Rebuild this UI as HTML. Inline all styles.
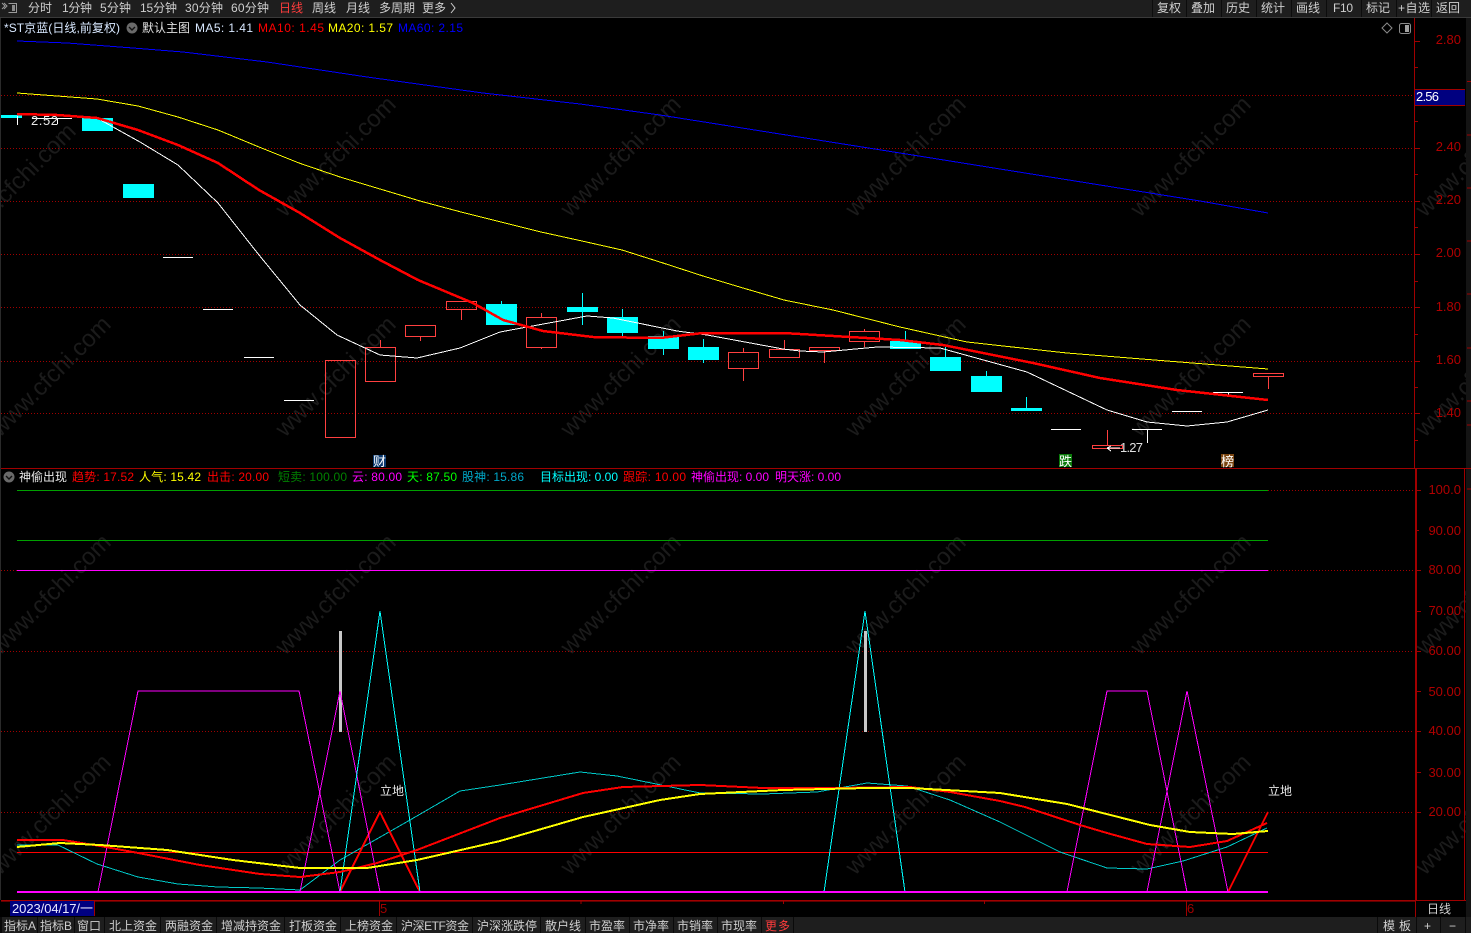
<!DOCTYPE html>
<html><head><meta charset="utf-8"><title>*ST京蓝</title>
<style>
html,body{margin:0;padding:0;background:#000;width:1471px;height:933px;overflow:hidden}
svg{display:block;position:absolute;left:0;top:0}
text{font-family:"Liberation Sans","Noto Sans CJK SC",sans-serif;font-size:12px}
.m{fill:#cfcfcf}
.ax{fill:#b00000;text-anchor:end}
.wm{fill:#1b1b1b;font-size:24px}
.g{stroke:#a00000;stroke-width:1;stroke-dasharray:1 2;fill:none}
.rk{fill:none;stroke:#ff4040;stroke-width:1}
.rw{stroke:#ff4040;stroke-width:1;fill:none}
.cy{fill:#00ffff}
.cw{stroke:#00ffff;stroke-width:1;fill:none}
.wd{stroke:#fff;stroke-width:1;fill:none}
.t{stroke:#a00000;stroke-width:1;fill:none}
.b{fill:#1e1e1e}
.l{fill:none}
</style></head><body>
<svg width="1471" height="933" viewBox="0 0 1471 933" xmlns="http://www.w3.org/2000/svg">
<rect width="1471" height="933" fill="#000"/>

<!-- watermark -->
<g transform="translate(8,3)">
<text class="wm" transform="translate(-43,242) rotate(-45)">www.cfchi.com</text>
<text class="wm" transform="translate(277,215) rotate(-45)">www.cfchi.com</text>
<text class="wm" transform="translate(562,215) rotate(-45)">www.cfchi.com</text>
<text class="wm" transform="translate(847,215) rotate(-45)">www.cfchi.com</text>
<text class="wm" transform="translate(1132,215) rotate(-45)">www.cfchi.com</text>
<text class="wm" transform="translate(1417,215) rotate(-45)">www.cfchi.com</text>
<text class="wm" transform="translate(-8,435) rotate(-45)">www.cfchi.com</text>
<text class="wm" transform="translate(277,435) rotate(-45)">www.cfchi.com</text>
<text class="wm" transform="translate(562,435) rotate(-45)">www.cfchi.com</text>
<text class="wm" transform="translate(847,435) rotate(-45)">www.cfchi.com</text>
<text class="wm" transform="translate(1132,435) rotate(-45)">www.cfchi.com</text>
<text class="wm" transform="translate(1417,435) rotate(-45)">www.cfchi.com</text>
<text class="wm" transform="translate(-8,653) rotate(-45)">www.cfchi.com</text>
<text class="wm" transform="translate(277,653) rotate(-45)">www.cfchi.com</text>
<text class="wm" transform="translate(562,653) rotate(-45)">www.cfchi.com</text>
<text class="wm" transform="translate(847,653) rotate(-45)">www.cfchi.com</text>
<text class="wm" transform="translate(1132,653) rotate(-45)">www.cfchi.com</text>
<text class="wm" transform="translate(1417,653) rotate(-45)">www.cfchi.com</text>
<text class="wm" transform="translate(-8,873) rotate(-45)">www.cfchi.com</text>
<text class="wm" transform="translate(277,873) rotate(-45)">www.cfchi.com</text>
<text class="wm" transform="translate(562,873) rotate(-45)">www.cfchi.com</text>
<text class="wm" transform="translate(847,873) rotate(-45)">www.cfchi.com</text>
<text class="wm" transform="translate(1132,873) rotate(-45)">www.cfchi.com</text>
<text class="wm" transform="translate(1417,873) rotate(-45)">www.cfchi.com</text>
</g>

<!-- top bar -->
<rect x="0" y="0" width="1471" height="17" class="b"/>
<rect x="0" y="17" width="1471" height="1" fill="#3a3a3a"/>
<g shape-rendering="crispEdges" fill="#0c0c0c">
<rect x="1152" y="0" width="1" height="17"/><rect x="1186" y="0" width="1" height="17"/><rect x="1221" y="0" width="1" height="17"/><rect x="1256" y="0" width="1" height="17"/><rect x="1291" y="0" width="1" height="17"/><rect x="1326" y="0" width="1" height="17"/><rect x="1361" y="0" width="1" height="17"/><rect x="1396" y="0" width="1" height="17"/><rect x="1431" y="0" width="1" height="17"/>
</g>
<g fill="none" stroke="#9a9a9a" stroke-width="1">
<path d="M2 3l3 3-3 3M4 3l3 3-3 3" />
<path d="M8.5 3.5H16.5V12.5H8.5" />
<rect x="12" y="5" width="3" height="6" fill="#8a8a8a" stroke="none"/>
</g>
<g class="m">
<text x="28" y="12" class="m" textLength="24">分时</text>
<text x="62" y="12" class="m" textLength="30">1分钟</text>
<text x="100" y="12" class="m" textLength="31">5分钟</text>
<text x="140" y="12" class="m" textLength="37">15分钟</text>
<text x="185" y="12" class="m" textLength="38">30分钟</text>
<text x="231" y="12" class="m" textLength="38">60分钟</text>
<text x="279" y="12" fill="#ff3c3c" textLength="24">日线</text>
<text x="312" y="12" class="m" textLength="24">周线</text>
<text x="346" y="12" class="m" textLength="24">月线</text>
<text x="379" y="12" class="m" textLength="36">多周期</text>
<text x="422" y="12" class="m" textLength="24">更多</text>
<path d="M451 3l4 5-4 5" fill="none" stroke="#cfcfcf"/>
<text x="1157" y="12" class="m" textLength="24">复权</text>
<text x="1191" y="12" class="m" textLength="24">叠加</text>
<text x="1226" y="12" class="m" textLength="24">历史</text>
<text x="1261" y="12" class="m" textLength="24">统计</text>
<text x="1296" y="12" class="m" textLength="24">画线</text>
<text x="1333" y="12" class="m" textLength="20">F10</text>
<text x="1366" y="12" class="m" textLength="24">标记</text>
<text x="1398" y="12" class="m" textLength="32">+自选</text>
<text x="1436" y="12" class="m" textLength="24">返回</text>
</g>

<!-- left edge / right strip -->
<rect x="0" y="18" width="1" height="882" fill="#2a2a2a"/>
<rect x="1466" y="18" width="5" height="899" fill="#141414"/>

<!-- grid main -->
<g shape-rendering="crispEdges">
<path class="g" d="M1 95.5H1414M1 148.5H1414M1 201.5H1414M1 254.5H1414M1 307.5H1414M1 361.5H1414M1 413.5H1414"/>
<path class="g" d="M1 651.5H1414M1 731.5H1414M1 812.5H1414"/>

<!-- candles -->
<rect class="cy" x="1" y="115" width="21" height="3"/>
<path class="wd" d="M17.5 116V125M32 118.5H72M57.5 118V124"/>
<rect class="cy" x="82" y="118" width="31" height="13"/>
<rect class="cy" x="123" y="184" width="31" height="14"/>
<path class="wd" d="M163 257.5H193M203 309.5H233M244 357.5H274M284 400.5H314"/>
<rect class="rk" x="325.5" y="360.5" width="30" height="77"/>
<rect class="rk" x="365.5" y="347.5" width="30" height="34"/><path class="rw" d="M380.5 340V347"/>
<rect class="rk" x="405.5" y="325.5" width="30" height="11"/><path class="rw" d="M420.5 337V341"/>
<rect class="rk" x="446.5" y="301.5" width="30" height="8"/><path class="rw" d="M461.5 310V320"/>
<rect class="cy" x="486" y="304" width="31" height="21"/><path class="cw" d="M501.5 301V304"/>
<rect class="rk" x="526.5" y="317.5" width="30" height="30"/><path class="rw" d="M541.5 313V317M541.5 348V349"/>
<rect class="cy" x="567" y="307" width="31" height="5"/><path class="cw" d="M582.5 293V325"/>
<rect class="cy" x="607" y="317" width="31" height="16"/><path class="cw" d="M622.5 309V336"/>
<rect class="cy" x="648" y="336" width="31" height="13"/><path class="cw" d="M663.5 331V355"/>
<rect class="cy" x="688" y="347" width="31" height="13"/><path class="cw" d="M703.5 339V363"/>
<rect class="rk" x="728.5" y="352.5" width="30" height="16"/><path class="rw" d="M743.5 348V352M743.5 369V381"/>
<rect class="rk" x="769.5" y="349.5" width="30" height="8"/><path class="rw" d="M784.5 340V349"/>
<rect class="rk" x="809.5" y="347.5" width="30" height="3"/><path class="rw" d="M824.5 351V363"/>
<rect class="rk" x="849.5" y="331.5" width="30" height="10"/><path class="rw" d="M864.5 329V331M864.5 342V347"/>
<rect class="cy" x="890" y="341" width="31" height="8"/><path class="cw" d="M905.5 331V341"/>
<rect class="cy" x="930" y="357" width="31" height="14"/><path class="cw" d="M945.5 347V357"/>
<rect class="cy" x="971" y="376" width="31" height="16"/><path class="cw" d="M986.5 371V376"/>
<rect class="cy" x="1011" y="408" width="31" height="3"/><path class="cw" d="M1026.5 397V408"/>
<path class="wd" d="M1051 429.5H1081"/>
<rect class="rk" x="1092.5" y="445.5" width="30" height="3"/><path class="rw" d="M1107.5 430V445"/>
<path class="wd" d="M1132 429.5H1162M1147.5 430V443M1172 411.5H1202M1213 392.5H1243M1228.5 393V395"/>
<rect class="rk" x="1253.5" y="373.5" width="30" height="3"/><path class="rw" d="M1268.5 377V389"/>
</g>

<!-- MA lines -->
<g shape-rendering="crispEdges" fill="none" stroke-linejoin="round">
<polyline stroke="#0000ff" stroke-width="1" points="17,41 67,43 133,48 183,52 267,62 367,77 483,93 580,104 660,115 780,134 900,153 1000,169 1100,185 1200,201 1268,213"/>
<polyline stroke="#ffff00" stroke-width="1" points="17,93 57,96 97,99 138,106 178,117 218,130 259,147 299,163 340,177 380,189 420,201 461,212 501,222 541,232 582,241 622,250 663,263 703,276 743,288 784,300 833,310 900,327 967,342 1067,353 1167,361 1268,369"/>
<polyline stroke="#ffffff" stroke-width="1" points="97,118 113,127 140,142 178,165 218,203 259,255 300,305 337,335 380,355 417,358 460,348 500,332 527,327 587,316 613,318 677,331 707,335 783,349 800,351 823,352 877,347 940,348 1027,372 1107,410 1147,422 1187,426 1227,422 1268,410"/>
<polyline stroke="#ff0000" stroke-width="2.5" points="17,114 57,115 97,118 138,130 178,145 218,163 259,190 300,213 340,238 380,260 418,280 473,303 503,320 543,331 593,337 660,338 703,333 783,333 800,334 850,337 900,340 943,345 1033,363 1100,378 1177,390 1268,400"/>
</g>

<!-- markers main -->
<text x="31" y="125" fill="#e8e8e8" style="font-size:13px" textLength="27">2.52</text>
<text x="1120" y="452" fill="#e0e0e0" style="font-size:13px" textLength="23">1.27</text>
<path d="M1107 448H1120M1107 448l4-2M1107 448l4 3" stroke="#fff" fill="none" shape-rendering="crispEdges"/>
<rect x="373" y="455" width="13" height="12" fill="#0b3a70"/><text x="373" y="466" fill="#fff" style="font-size:13px">财</text>
<rect x="1059" y="454" width="13" height="13" fill="#0a7a0a"/><text x="1059" y="466" fill="#fff" style="font-size:13px">跌</text>
<rect x="1221" y="454" width="13" height="13" fill="#7a4510"/><text x="1221" y="466" fill="#fff" style="font-size:13px">榜</text>

<!-- main header -->
<text x="4" y="32" fill="#d8e8ff" textLength="116">*ST京蓝(日线,前复权)</text>
<circle cx="132" cy="28" r="5.5" fill="#6a6a6a"/><path d="M129 27l3 3 3-3" stroke="#111" stroke-width="1.4" fill="none"/>
<text x="142" y="32" fill="#e0e0e0" textLength="48">默认主图</text>
<text x="195" y="32" fill="#d8e8ff" textLength="58">MA5: 1.41</text>
<text x="258" y="32" fill="#ff0000" textLength="66">MA10: 1.45</text>
<text x="328" y="32" fill="#ffff00" textLength="65">MA20: 1.57</text>
<text x="398" y="32" fill="#0000ff" textLength="65">MA60: 2.15</text>
<path d="M1387 23l5 5-5 5-5-5z" fill="none" stroke="#8a8a8a"/>
<rect x="1399.5" y="23.5" width="11" height="10" rx="2" fill="none" stroke="#8a8a8a"/><rect x="1405" y="25" width="4" height="7" fill="#a0a0a0"/>

<!-- axis main -->
<g shape-rendering="crispEdges">
<path class="t" d="M1414.5 18V468M1415 41.5H1420M1415 67.5H1418M1415 121.5H1418M1415 148.5H1420M1415 174.5H1418M1415 201.5H1420M1415 227.5H1418M1415 254.5H1420M1415 281.5H1418M1415 307.5H1420M1415 334.5H1418M1415 361.5H1420M1415 387.5H1418M1415 413.5H1420M1415 440.5H1418"/>
<path stroke="#a00000" d="M1467 81.5H1471M1467 135H1471M1467 188H1471M1467 241H1471M1467 294H1471M1467 348H1471M1467 401H1471M1467 425H1471M1467 489H1471"/>
<rect x="1415" y="89" width="50" height="16" fill="#000080"/>
<path stroke="#a00000" d="M1415 89.5H1465M1415 105.5H1465"/>
</g>
<text x="1416" y="101" fill="#fff" style="font-size:13px" textLength="23">2.56</text>
<g>
<text class="ax" x="1461" y="44" style="font-size:13px">2.80</text>
<text class="ax" x="1461" y="151" style="font-size:13px">2.40</text>
<text class="ax" x="1461" y="204" style="font-size:13px">2.20</text>
<text class="ax" x="1461" y="257" style="font-size:13px">2.00</text>
<text class="ax" x="1461" y="311" style="font-size:13px">1.80</text>
<text class="ax" x="1461" y="364" style="font-size:13px">1.60</text>
<text class="ax" x="1461" y="417" style="font-size:13px">1.40</text>
</g>

<!-- divider -->
<rect x="1" y="468" width="1470" height="1" fill="#a00000" shape-rendering="crispEdges"/>

<!-- lower header -->
<circle cx="9" cy="477" r="5.5" fill="#6a6a6a"/><path d="M6 476l3 3 3-3" stroke="#111" stroke-width="1.4" fill="none"/>
<text x="19" y="481" fill="#e8e8e8" textLength="48">神偷出现</text>
<text x="72" y="481" fill="#ff0000" textLength="62">趋势: 17.52</text>
<text x="139" y="481" fill="#ffff00" textLength="62">人气: 15.42</text>
<text x="207" y="481" fill="#ff0000" textLength="62">出击: 20.00</text>
<text x="278" y="481" fill="#008000" textLength="69">短卖: 100.00</text>
<text x="352" y="481" fill="#ff00ff" textLength="50">云: 80.00</text>
<text x="407" y="481" fill="#00ff00" textLength="50">天: 87.50</text>
<text x="462" y="481" fill="#00a8c8" textLength="62">股神: 15.86</text>
<text x="540" y="481" fill="#00ffff" textLength="78">目标出现: 0.00</text>
<text x="623" y="481" fill="#ff0000" textLength="63">跟踪: 10.00</text>
<text x="691" y="481" fill="#ff00ff" textLength="78">神偷出现: 0.00</text>
<text x="775" y="481" fill="#ff00ff" textLength="66">明天涨: 0.00</text>

<!-- lower solid levels -->
<g shape-rendering="crispEdges" fill="none">
<path stroke="#00a000" d="M17 490.5H1268M17 540.5H1268"/>
<path stroke="#ff00ff" d="M17 570.5H1268"/>
<path class="g" d="M1 570.5H17M1268 570.5H1414M1268 490.5H1414"/>
<path stroke="#ff0000" d="M17 852.5H1268"/>

<!-- grey bars -->
<rect x="339" y="631" width="3" height="101" fill="#c8c8c8" stroke="none"/>
<rect x="864" y="631" width="3" height="101" fill="#c8c8c8" stroke="none"/>

<!-- teal -->
<polyline stroke="#00c8c8" stroke-width="1" points="17,845 58,845 97,864 138,877 178,884 218,887 259,888 300,890 340,860 410,820 460,791 500,785 580,772 617,776 700,793 763,794 817,792 867,783 907,786 950,800 1000,822 1060,852 1107,868 1147,869 1183,861 1227,847 1267,828"/>
<path stroke="#00c8c8" d="M300 891.5H340M1147 891.5H1187"/>

<!-- red triangles -->
<polyline stroke="#ff0000" stroke-width="2" points="340,892 380,812 420,892"/>
<polyline stroke="#ff0000" stroke-width="2" points="1228,892 1268,812"/>

<!-- magenta -->
<polyline stroke="#ff00ff" stroke-width="1" points="98,892 138,691 299,691 340,892"/>
<polyline stroke="#ff00ff" stroke-width="1" points="300,892 340,691 380,892"/>
<polyline stroke="#ff00ff" stroke-width="1" points="1067,892 1107,691 1147,691 1187,892"/>
<polyline stroke="#ff00ff" stroke-width="1" points="1147,892 1187,691 1228,892"/>

<!-- cyan -->
<polyline stroke="#00ffff" stroke-width="1" points="340,892 380,611 420,892"/>
<polyline stroke="#00ffff" stroke-width="1" points="824,892 865,611 905,892"/>

<!-- thick smooth lines -->
<polyline stroke="#ff0000" stroke-width="2" points="17,840 63,840 100,846 133,852 200,865 260,874 300,877 340,872 377,863 417,850 500,818 583,793 623,787 700,785 763,788 833,788 910,787 950,792 1000,801 1025,807 1080,825 1107,833 1147,844 1190,847 1227,841 1267,823"/>
<polyline stroke="#ffff00" stroke-width="2" points="17,847 60,843 100,845 167,850 233,860 300,868 367,868 417,860 500,841 583,817 660,800 700,794 783,790 867,788 910,788 1000,793 1067,804 1150,825 1190,832 1233,834 1268,831"/>

<!-- baseline -->
<path stroke="#ff00ff" stroke-width="2" d="M17 892H1268"/>
</g>
<text x="380" y="795" fill="#e8e8e8" textLength="24">立地</text>
<text x="1268" y="795" fill="#e8e8e8" textLength="24">立地</text>

<!-- lower axis -->
<g shape-rendering="crispEdges">
<rect x="1415" y="469" width="2" height="431" fill="#a00000"/>
<rect x="1464" y="469" width="1" height="431" fill="#a00000"/>
<path class="t" d="M1417 490.5H1421M1417 530.5H1419M1417 570.5H1421M1417 611.5H1421M1417 651.5H1421M1417 691.5H1421M1417 731.5H1421M1417 772.5H1421M1417 812.5H1421"/>
<rect x="1" y="900" width="1465" height="1" fill="#a00000"/>
<rect x="1" y="901" width="1414" height="1" fill="#600000"/>
<rect x="1415" y="900" width="1" height="17" fill="#a00000"/>
<rect x="379" y="901" width="1" height="15" fill="#a00000"/>
<rect x="1186" y="901" width="1" height="15" fill="#a00000"/>
<path class="t" d="M581 901V904M783.5 901V904M984.5 901V904"/>
<rect x="10" y="901" width="84" height="15" fill="#000080"/>
<rect x="94" y="901" width="1" height="15" fill="#a00000"/>
</g>
<g>
<text class="ax" x="1461" y="494" style="font-size:13px" >100.0</text>
<text class="ax" x="1461" y="535" style="font-size:13px">90.00</text>
<text class="ax" x="1461" y="574" style="font-size:13px">80.00</text>
<text class="ax" x="1461" y="615" style="font-size:13px">70.00</text>
<text class="ax" x="1461" y="655" style="font-size:13px">60.00</text>
<text class="ax" x="1461" y="696" style="font-size:13px">50.00</text>
<text class="ax" x="1461" y="735" style="font-size:13px">40.00</text>
<text class="ax" x="1461" y="777" style="font-size:13px">30.00</text>
<text class="ax" x="1461" y="816" style="font-size:13px">20.00</text>
</g>
<text x="12" y="913" fill="#e8e8ff" style="font-size:13px" textLength="81">2023/04/17/一</text>
<text x="380" y="913" fill="#a00000" style="font-size:13px">5</text>
<text x="1187" y="913" fill="#a00000" style="font-size:13px">6</text>
<text x="1427" y="913" fill="#d0d0d0" textLength="24">日线</text>

<!-- bottom bar -->
<g shape-rendering="crispEdges">
<rect x="0" y="917" width="1471" height="16" fill="#0a0a0a"/>
<g class="b">
<rect x="2" y="917" width="35" height="16"/><rect x="38" y="917" width="36" height="16"/><rect x="75" y="917" width="29" height="16"/><rect x="105" y="917" width="55" height="16"/><rect x="161" y="917" width="55" height="16"/><rect x="217" y="917" width="67" height="16"/><rect x="285" y="917" width="55" height="16"/><rect x="341" y="917" width="55" height="16"/><rect x="397" y="917" width="75" height="16"/><rect x="473" y="917" width="67" height="16"/><rect x="541" y="917" width="44" height="16"/><rect x="586" y="917" width="43" height="16"/><rect x="630" y="917" width="43" height="16"/><rect x="674" y="917" width="43" height="16"/><rect x="718" y="917" width="43" height="16"/><rect x="762" y="917" width="31" height="16"/>
<rect x="794" y="917" width="583" height="16"/><rect x="1378" y="917" width="38" height="16"/><rect x="1417" y="917" width="23" height="16"/><rect x="1441" y="917" width="24" height="16"/><rect x="1466" y="917" width="5" height="16"/>
</g>
</g>
<g>
<text x="4" y="930" class="m" textLength="32">指标A</text>
<text x="40" y="930" class="m" textLength="32">指标B</text>
<text x="77" y="930" class="m" textLength="24">窗口</text>
<text x="109" y="930" class="m" textLength="48">北上资金</text>
<text x="165" y="930" class="m" textLength="48">两融资金</text>
<text x="221" y="930" class="m" textLength="60">增减持资金</text>
<text x="289" y="930" class="m" textLength="48">打板资金</text>
<text x="345" y="930" class="m" textLength="48">上榜资金</text>
<text x="401" y="930" class="m" textLength="68">沪深ETF资金</text>
<text x="477" y="930" class="m" textLength="60">沪深涨跌停</text>
<text x="545" y="930" class="m" textLength="36">散户线</text>
<text x="589" y="930" class="m" textLength="36">市盈率</text>
<text x="633" y="930" class="m" textLength="36">市净率</text>
<text x="677" y="930" class="m" textLength="36">市销率</text>
<text x="721" y="930" class="m" textLength="36">市现率</text>
<text x="765" y="930" fill="#ff3c3c" textLength="25">更多</text>
<text x="1383" y="930" class="m" textLength="28">模 板</text>
<text x="1424" y="930" class="m">+</text>
<text x="1449" y="930" class="m">−</text>
</g>
</svg>
</body></html>
